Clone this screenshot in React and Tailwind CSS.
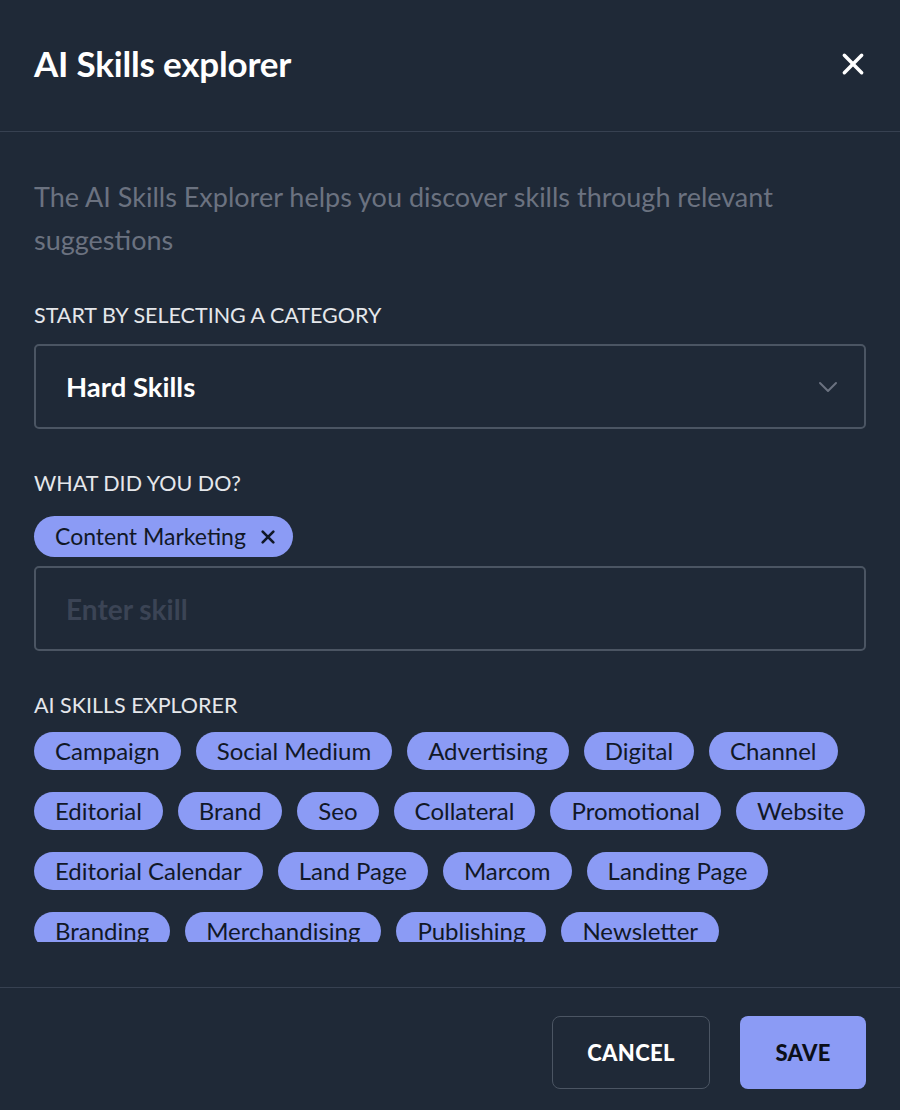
import { useState } from 'react';

const suggestionRows = [
  ['Campaign', 'Social Medium', 'Advertising', 'Digital', 'Channel'],
  ['Editorial', 'Brand', 'Seo', 'Collateral', 'Promotional', 'Website'],
  ['Editorial Calendar', 'Land Page', 'Marcom', 'Landing Page'],
  ['Branding', 'Merchandising', 'Publishing', 'Newsletter'],
];

const font = { fontFamily: 'Lato, "Noto Sans", sans-serif' };

function CloseIcon({ className }) {
  return (
    <svg className={className} viewBox="0 0 24 24" fill="none" stroke="currentColor" strokeLinecap="round">
      <path d="M4 4l16 16M20 4L4 20" />
    </svg>
  );
}

function Chevron() {
  return (
    <svg className="w-5 h-5 text-[#6b7280]" viewBox="0 0 20 20" fill="none" stroke="currentColor" strokeWidth={2} strokeLinecap="round" strokeLinejoin="round">
      <path d="M2 6l8 8 8-8" />
    </svg>
  );
}

function Chip({ label, onAdd }) {
  return (
    <button
      onClick={onAdd}
      className="h-[38px] px-[21px] rounded-full bg-[#8b9bf5] text-[#111827] text-[24px] leading-none flex items-center shrink-0"
    >
      {label}
    </button>
  );
}

export default function App() {
  const [selected, setSelected] = useState(['Content Marketing']);
  const [skill, setSkill] = useState('');

  function addSkill(name) {
    if (!selected.includes(name)) setSelected([...selected, name]);
  }

  function removeSkill(name) {
    setSelected(selected.filter((s) => s !== name));
  }

  return (
    <div className="w-[900px] h-[1110px] bg-[#1f2937] flex flex-col" style={font}>
      <div className="h-[132px] shrink-0 px-[34px] pb-1 flex items-center justify-between border-b border-[#374151]">
        <h1 className="text-[35px] font-bold text-white tracking-[-0.2px]">AI Skills explorer</h1>
        <button className="text-white">
          <CloseIcon className="w-[26px] h-[26px] [stroke-width:3.2]" />
        </button>
      </div>

      <div className="px-[34px] pt-[43px] flex-1 flex flex-col">
        <p className="max-w-[800px] text-[27px] leading-[43px] text-[#6b7280]">
          The AI Skills Explorer helps you discover skills through relevant suggestions
        </p>

        <label className="mt-[40px] text-[21.5px] leading-[28px] text-[#e5e7eb] uppercase">
          Start by selecting a category
        </label>
        <div className="mt-[15px] h-[85px] border-2 border-[#4b5563] rounded-[5px] pl-[30px] pr-[26px] flex items-center justify-between">
          <span className="text-[27.5px] font-bold text-white">Hard Skills</span>
          <Chevron />
        </div>

        <label className="mt-[40px] text-[21.5px] leading-[28px] text-[#e5e7eb] uppercase">
          What did you do?
        </label>
        <div className="mt-[19px] flex gap-2">
          {selected.map((s) => (
            <span
              key={s}
              className="h-[41px] pl-[21px] pr-[17px] rounded-full bg-[#8b9bf5] text-[#111827] text-[23px] flex items-center gap-[14px]"
            >
              {s}
              <button onClick={() => removeSkill(s)} className="text-[#111827]">
                <CloseIcon className="w-[16px] h-[16px] [stroke-width:4]" />
              </button>
            </span>
          ))}
        </div>
        <input
          value={skill}
          onChange={(e) => setSkill(e.target.value)}
          placeholder="Enter skill"
          className="mt-[9px] h-[85px] border-2 border-[#4b5563] rounded-[5px] px-[30px] bg-transparent text-[28px] font-bold text-white placeholder:text-[#3b4455] outline-none"
        />

        <label className="mt-[40px] text-[21.5px] leading-[28px] text-[#e5e7eb] uppercase">
          AI Skills Explorer
        </label>
        <div className="mt-[13px] h-[210px] overflow-hidden flex flex-col gap-[22px]">
          {suggestionRows.map((row, i) => (
            <div key={i} className="flex gap-[15px]">
              {row.map((name) => (
                <Chip key={name} label={name} onAdd={() => addSkill(name)} />
              ))}
            </div>
          ))}
        </div>
      </div>

      <div className="h-[123px] shrink-0 border-t border-[#374151] px-[34px] pt-[28px] flex justify-end gap-[30px]">
        <button className="h-[73px] w-[158px] border border-[#4b5563] rounded-[8px] text-white text-[22px] font-black uppercase tracking-[0.3px]">
          Cancel
        </button>
        <button className="h-[73px] w-[126px] bg-[#8b9bf5] rounded-[8px] text-[#0b0f19] text-[22px] font-black uppercase tracking-[0.3px]">
          Save
        </button>
      </div>
    </div>
  );
}
